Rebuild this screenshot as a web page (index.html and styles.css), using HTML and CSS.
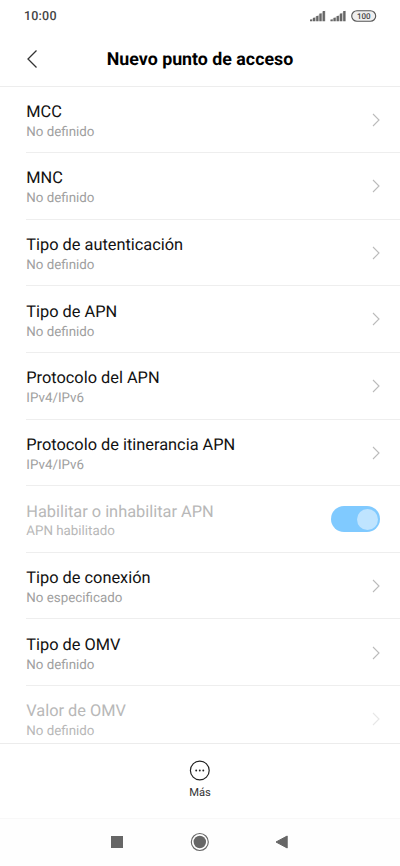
FILE: index.html
```
<!DOCTYPE html>
<html lang="es"><head><meta charset="utf-8"><title>Nuevo punto de acceso</title><link rel="stylesheet" href="styles.css"></head>
<body>
<div class="status"><span class="time">10:00</span>
<svg class="sig" width="68" height="14" viewBox="0 0 68 14"><g fill="#666"><path d="M1 12.200V11L16.500 1.500V12.200Z" opacity=".3"/><rect x="1" y="10.500" width="2.200" height="1.700"/><rect x="4" y="8.800" width="2.200" height="3.400"/><rect x="7.200" y="7" width="2.200" height="5.200"/><rect x="10.400" y="4.500" width="2.200" height="7.700"/><rect x="13.700" y="2" width="2.200" height="10.200"/><path d="M21.500 12.200V11L37 1.500V12.200Z" opacity=".3"/><rect x="21.500" y="10.500" width="2.200" height="1.700"/><rect x="24.500" y="8.800" width="2.200" height="3.400"/><rect x="27.700" y="7" width="2.200" height="5.200"/><rect x="30.900" y="4.500" width="2.200" height="7.700"/><rect x="34.200" y="2" width="2.200" height="10.200"/></g><rect x="42.700" y="1.700" width="24" height="10.600" rx="5.300" fill="#efefef" stroke="#555" stroke-width="1.100"/><text x="54.700" y="9.700" text-anchor="middle" class="bat">100</text></svg></div>
<header class="head"><svg class="back" width="12" height="20" viewBox="0 0 12 20"><path d="M10.500 1.500L2 10L10.500 18.500" fill="none" stroke="#333" stroke-width="1.300"/></svg><h1>Nuevo punto de acceso</h1></header>
<main class="list">
<div class="row"><div class="txt"><b>MCC</b><small>No definido</small></div><svg class="chev" viewBox="0 0 8 14"><path d="M1 1L7 7L1 13"/></svg></div>
<div class="row"><div class="txt"><b>MNC</b><small>No definido</small></div><svg class="chev" viewBox="0 0 8 14"><path d="M1 1L7 7L1 13"/></svg></div>
<div class="row"><div class="txt"><b>Tipo de autenticación</b><small>No definido</small></div><svg class="chev" viewBox="0 0 8 14"><path d="M1 1L7 7L1 13"/></svg></div>
<div class="row"><div class="txt"><b>Tipo de APN</b><small>No definido</small></div><svg class="chev" viewBox="0 0 8 14"><path d="M1 1L7 7L1 13"/></svg></div>
<div class="row"><div class="txt"><b>Protocolo del APN</b><small>IPv4/IPv6</small></div><svg class="chev" viewBox="0 0 8 14"><path d="M1 1L7 7L1 13"/></svg></div>
<div class="row"><div class="txt"><b>Protocolo de itinerancia APN</b><small>IPv4/IPv6</small></div><svg class="chev" viewBox="0 0 8 14"><path d="M1 1L7 7L1 13"/></svg></div>
<div class="row off"><div class="txt"><b>Habilitar o inhabilitar APN</b><small>APN habilitado</small></div><span class="toggle"><i></i></span></div>
<div class="row"><div class="txt"><b>Tipo de conexión</b><small>No especificado</small></div><svg class="chev" viewBox="0 0 8 14"><path d="M1 1L7 7L1 13"/></svg></div>
<div class="row"><div class="txt"><b>Tipo de OMV</b><small>No definido</small></div><svg class="chev" viewBox="0 0 8 14"><path d="M1 1L7 7L1 13"/></svg></div>
<div class="row off"><div class="txt"><b>Valor de OMV</b><small>No definido</small></div><svg class="chev" viewBox="0 0 8 14"><path d="M1 1L7 7L1 13"/></svg></div>
</main>
<footer class="more"><svg width="22" height="22" viewBox="0 0 22 22"><circle cx="10.800" cy="10.500" r="9.400" fill="none" stroke="#222" stroke-width="1.200"/><g fill="#222"><circle cx="7.200" cy="10.500" r=".95"/><circle cx="10.800" cy="10.500" r=".95"/><circle cx="14.300" cy="10.500" r=".95"/></g></svg><span>Más</span></footer>
<nav class="nav"><svg width="180" height="20" viewBox="0 0 180 20"><g fill="#666"><rect x="1" y="4" width="12" height="12"/><circle cx="89.800" cy="10" r="6.200"/><path d="M166 10L177.200 4V16Z" stroke="#666" stroke-width="1" stroke-linejoin="round"/></g><circle cx="89.800" cy="10" r="8.500" fill="none" stroke="#666" stroke-width="1.100"/></svg></nav>
</body></html>
```
FILE: styles.css
```
*{box-sizing:border-box}
body{margin:0;width:400px;height:866px;overflow:hidden;background:#fff;font-family:Roboto,sans-serif;text-rendering:geometricPrecision;display:flex;flex-direction:column}
.status{height:32px;flex:none;display:flex;justify-content:space-between;align-items:center;padding:0 23px 0 24px}
.time{font-size:12.5px;font-weight:500;color:#444;letter-spacing:.2px}
.bat{font-size:8px;font-weight:500;fill:#444}
.head{height:55px;flex:none;display:grid;grid-template-columns:26px 1fr 26px;align-items:center;padding:0 26px;border-bottom:1px solid #ededed}
.back{margin-top:-1px}
h1{margin:0;padding-top:1px;text-align:center;font-size:17.8px;line-height:24px;font-weight:700;color:#000;white-space:nowrap}
.list{height:656px;flex:none;overflow:hidden;padding-left:26px}
.row{height:66.65px;display:flex;justify-content:space-between;align-items:center;padding:.6px 20px 0 0;border-bottom:1px solid #eee}
.row:first-child{height:66px;padding-top:0}
.txt{display:flex;flex-direction:column;padding:4.8px 0 0 .3px}
b{font-weight:400;font-size:16.35px;line-height:21px;color:#111}
small{padding-top:.9px;font-size:13.35px;line-height:20.4px;color:#a0a0a0}
.chev{width:8px;height:14px;fill:none;stroke:#bbb;stroke-width:1.1}
.off b,.off small{color:#b8b8b8}
.off .chev{opacity:.35}
.toggle{width:49px;height:26px;border-radius:13px;background:#80caff;display:flex;justify-content:flex-end;align-items:center;padding-right:2.5px}
.toggle i{width:21px;height:21px;border-radius:50%;background:#bfe4ff}
.more{height:75px;flex:none;border-top:1px solid #ececec;display:flex;flex-direction:column;align-items:center;padding-top:16px;font-size:11.2px;color:#333}
.more span{margin-top:4px;line-height:14px}
.nav{height:48px;flex:none;background:#fefefe;border-top:1px solid #f8f8f8;display:flex;justify-content:center;align-items:center;padding-bottom:1px}
```
